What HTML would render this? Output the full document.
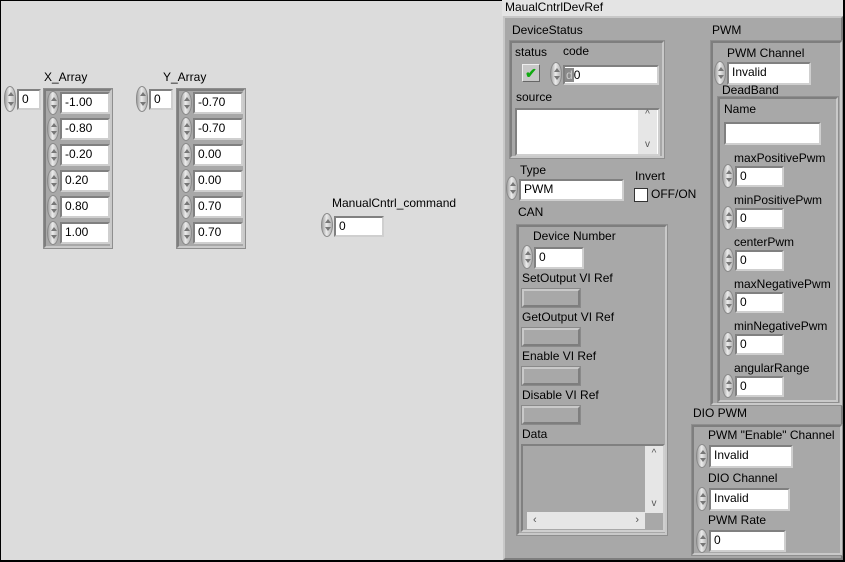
<!DOCTYPE html>
<html><head><meta charset="utf-8"><style>
*{box-sizing:border-box;margin:0;padding:0}
body{width:845px;height:562px;overflow:hidden;background:#dcdcdc;font-family:"Liberation Sans",sans-serif;font-size:12px;color:#000;position:relative}
.a{position:absolute;white-space:nowrap;line-height:13px;margin-top:-1px}
.frame{position:absolute;border:2px solid;border-color:#7e7e7e #c9c9c9 #c9c9c9 #7e7e7e;outline:1px solid #8e8e8e}
.box{position:absolute;background:#fff;border:2px solid;border-color:#808080 #cfcfcf #cfcfcf #808080;padding-left:3px;font-size:12px;line-height:16px}
.sp{position:absolute;width:12px;border-radius:6px/12px;background:linear-gradient(90deg,#a0a0a0,#ececec 45%,#b0b0b0);border:1px solid #8a8a8a}
.sp:before,.sp:after{content:"";position:absolute;left:3px;border-left:3px solid transparent;border-right:3px solid transparent}
.sp:before{top:5px;border-bottom:4px solid #777}
.sp:after{bottom:5px;border-top:4px solid #777}
.ref{position:absolute;background:#a8a8a8;border:2px solid;border-color:#c9c9c9 #7e7e7e #7e7e7e #c9c9c9;outline:1px solid #8a8a8a}
</style></head><body>
<div style="position:absolute;left:0;top:0;width:845px;height:562px;border:1px solid #000;border-right-width:2px;border-bottom-width:2px"></div>

<div class="a" style="left:44px;top:72px">X_Array</div>
<div class="sp" style="left:4px;top:86px;height:26px"></div>
<div class="box" style="left:17px;top:89px;width:24px;height:21px">0</div>
<div class="frame" style="left:44px;top:89px;width:68px;height:159px;background:#a8a8a8"></div>
<div class="a" style="left:163px;top:72px">Y_Array</div>
<div class="sp" style="left:136px;top:86px;height:26px"></div>
<div class="box" style="left:149px;top:89px;width:24px;height:21px">0</div>
<div class="frame" style="left:177px;top:89px;width:68px;height:159px;background:#a8a8a8"></div>

<div class="sp" style="left:47px;top:91px;height:24px"></div><div class="box" style="left:60px;top:92px;width:50px;height:22px">-1.00</div>
<div class="sp" style="left:47px;top:117px;height:24px"></div><div class="box" style="left:60px;top:118px;width:50px;height:22px">-0.80</div>
<div class="sp" style="left:47px;top:143px;height:24px"></div><div class="box" style="left:60px;top:144px;width:50px;height:22px">-0.20</div>
<div class="sp" style="left:47px;top:169px;height:24px"></div><div class="box" style="left:60px;top:170px;width:50px;height:22px">0.20</div>
<div class="sp" style="left:47px;top:195px;height:24px"></div><div class="box" style="left:60px;top:196px;width:50px;height:22px">0.80</div>
<div class="sp" style="left:47px;top:221px;height:24px"></div><div class="box" style="left:60px;top:222px;width:50px;height:22px">1.00</div>

<div class="sp" style="left:180px;top:91px;height:24px"></div><div class="box" style="left:193px;top:92px;width:50px;height:22px">-0.70</div>
<div class="sp" style="left:180px;top:117px;height:24px"></div><div class="box" style="left:193px;top:118px;width:50px;height:22px">-0.70</div>
<div class="sp" style="left:180px;top:143px;height:24px"></div><div class="box" style="left:193px;top:144px;width:50px;height:22px">0.00</div>
<div class="sp" style="left:180px;top:169px;height:24px"></div><div class="box" style="left:193px;top:170px;width:50px;height:22px">0.00</div>
<div class="sp" style="left:180px;top:195px;height:24px"></div><div class="box" style="left:193px;top:196px;width:50px;height:22px">0.70</div>
<div class="sp" style="left:180px;top:221px;height:24px"></div><div class="box" style="left:193px;top:222px;width:50px;height:22px">0.70</div>

<div class="a" style="left:332px;top:198px">ManualCntrl_command</div>
<div class="sp" style="left:321px;top:213px;height:24px"></div>
<div class="box" style="left:334px;top:216px;width:50px;height:21px">0</div>

<div style="position:absolute;left:502px;top:0;width:341px;height:16px;background:#e4e4e4"></div>
<div class="a" style="left:505px;top:2px">MaualCntrlDevRef</div>
<div style="position:absolute;left:503px;top:16px;width:340px;height:544px;background:#a8a8a8;border:2px solid;border-color:#c8c8c8 #7e7e7e #7e7e7e #c8c8c8"></div>

<div class="a" style="left:512px;top:25px">DeviceStatus</div>
<div class="frame" style="left:510px;top:41px;width:154px;height:117px"></div>
<div class="a" style="left:515px;top:47px">status</div>
<div class="a" style="left:563px;top:46px">code</div>
<div style="position:absolute;left:522px;top:64px;width:18px;height:18px;background:#c8c8c8;border:1px solid;border-color:#eee #666 #666 #eee;color:#1a1;font-weight:bold;font-size:14px;line-height:16px;text-align:center">✔</div>
<div class="sp" style="left:550px;top:62px;height:24px"></div>
<div style="position:absolute;left:563px;top:65px;width:96px;height:20px;background:#fff;border:2px solid;border-color:#808080 #cfcfcf #cfcfcf #808080;font-size:12px;line-height:16px"><span style="background:#8a8a8a;color:#ccc;padding:0 1px">d</span>0</div>
<div class="a" style="left:516px;top:92px">source</div>
<div class="box" style="left:515px;top:108px;width:145px;height:48px"></div>
<div style="position:absolute;left:638px;top:110px;width:19px;height:44px;background:#e6e6e6;font-size:10px;color:#555;text-align:center;line-height:10px">^<br><br><br>v</div>

<div class="a" style="left:520px;top:165px">Type</div>
<div class="sp" style="left:506px;top:176px;height:24px"></div>
<div class="box" style="left:519px;top:179px;width:105px;height:22px">PWM</div>
<div class="a" style="left:635px;top:171px">Invert</div>
<div style="position:absolute;left:634px;top:188px;width:14px;height:14px;background:#fff;border:1px solid #333"></div>
<div class="a" style="left:651px;top:189px">OFF/ON</div>

<div class="a" style="left:518px;top:207px">CAN</div>
<div class="frame" style="left:517px;top:225px;width:150px;height:310px"></div>
<div class="a" style="left:533px;top:231px">Device Number</div>
<div class="sp" style="left:521px;top:245px;height:24px"></div>
<div class="box" style="left:534px;top:247px;width:50px;height:22px">0</div>
<div class="a" style="left:522px;top:273px">SetOutput VI Ref</div>
<div class="ref" style="left:522px;top:289px;width:58px;height:18px"></div>
<div class="a" style="left:522px;top:312px">GetOutput VI Ref</div>
<div class="ref" style="left:522px;top:328px;width:58px;height:18px"></div>
<div class="a" style="left:522px;top:351px">Enable VI Ref</div>
<div class="ref" style="left:522px;top:367px;width:58px;height:18px"></div>
<div class="a" style="left:522px;top:390px">Disable VI Ref</div>
<div class="ref" style="left:522px;top:406px;width:58px;height:18px"></div>
<div class="a" style="left:522px;top:429px">Data</div>
<div style="position:absolute;left:521px;top:444px;width:144px;height:88px;background:#a8a8a8;border:2px solid;border-color:#808080 #cfcfcf #cfcfcf #808080"></div>
<div style="position:absolute;left:645px;top:446px;width:18px;height:67px;background:#e6e6e6;font-size:10px;color:#555;text-align:center;line-height:10px;padding-top:3px">^<br><br><br><br><br>v</div>
<div style="position:absolute;left:527px;top:512px;width:118px;height:17px;background:#e6e6e6;font-size:11px;color:#555;line-height:17px;padding:0 6px">‹<span style="float:right">›</span></div>

<div class="a" style="left:712px;top:25px">PWM</div>
<div class="frame" style="left:711px;top:41px;width:131px;height:364px"></div>
<div class="a" style="left:727px;top:48px">PWM Channel</div>
<div class="sp" style="left:714px;top:61px;height:24px"></div>
<div class="box" style="left:727px;top:62px;width:84px;height:23px">Invalid</div>
<div class="a" style="left:722px;top:85px">DeadBand</div>
<div class="frame" style="left:718px;top:97px;width:120px;height:305px"></div>
<div class="a" style="left:724px;top:104px">Name</div>
<div class="box" style="left:724px;top:122px;width:97px;height:23px"></div>
<div class="a" style="left:734px;top:153px">maxPositivePwm</div>
<div class="sp" style="left:722px;top:164px;height:24px"></div><div class="box" style="left:735px;top:166px;width:49px;height:21px">0</div>
<div class="a" style="left:734px;top:195px">minPositivePwm</div>
<div class="sp" style="left:722px;top:206px;height:24px"></div><div class="box" style="left:735px;top:208px;width:49px;height:21px">0</div>
<div class="a" style="left:734px;top:237px">centerPwm</div>
<div class="sp" style="left:722px;top:248px;height:24px"></div><div class="box" style="left:735px;top:250px;width:49px;height:21px">0</div>
<div class="a" style="left:734px;top:279px">maxNegativePwm</div>
<div class="sp" style="left:722px;top:290px;height:24px"></div><div class="box" style="left:735px;top:292px;width:49px;height:21px">0</div>
<div class="a" style="left:734px;top:321px">minNegativePwm</div>
<div class="sp" style="left:722px;top:332px;height:24px"></div><div class="box" style="left:735px;top:334px;width:49px;height:21px">0</div>
<div class="a" style="left:734px;top:363px">angularRange</div>
<div class="sp" style="left:722px;top:374px;height:24px"></div><div class="box" style="left:735px;top:376px;width:49px;height:21px">0</div>

<div class="a" style="left:693px;top:408px">DIO PWM</div>
<div class="frame" style="left:692px;top:425px;width:150px;height:130px"></div>
<div class="a" style="left:708px;top:430px">PWM "Enable" Channel</div>
<div class="sp" style="left:696px;top:444px;height:24px"></div>
<div class="box" style="left:709px;top:445px;width:84px;height:23px">Invalid</div>
<div class="a" style="left:708px;top:473px">DIO Channel</div>
<div class="sp" style="left:696px;top:487px;height:24px"></div>
<div class="box" style="left:709px;top:488px;width:81px;height:23px">Invalid</div>
<div class="a" style="left:708px;top:515px">PWM Rate</div>
<div class="sp" style="left:696px;top:529px;height:24px"></div>
<div class="box" style="left:709px;top:530px;width:77px;height:22px">0</div>
</body></html>
